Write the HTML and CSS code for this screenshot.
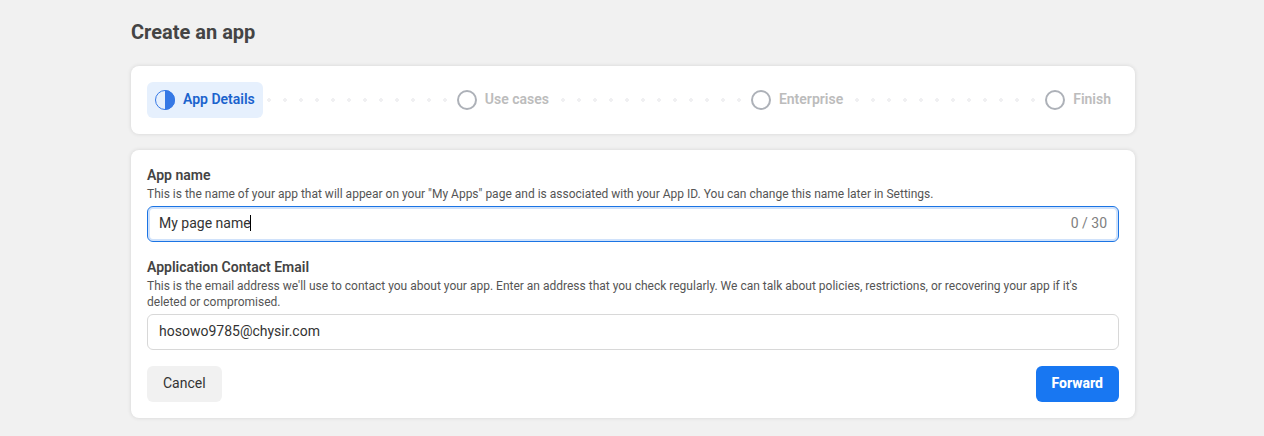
FILE: index.html
```html
<!DOCTYPE html>
<html lang="en">
<head>
<meta charset="utf-8">
<meta name="viewport" content="width=device-width, initial-scale=1">
<title>Create an app</title>
<link rel="stylesheet" href="styles.css">
</head>
<body>
<main class="page">
  <h1 class="page-title">Create an app</h1>

  <ol class="card steps">
    <li class="step step-current" aria-current="step">
      <svg class="step-icon" viewBox="0 0 20 20" aria-hidden="true">
        <circle cx="10" cy="10" r="9.5" fill="none" stroke="currentColor"/>
        <path d="M10 0a10 10 0 0 1 0 20z" fill="currentColor"/>
      </svg>
      <span class="step-label">App Details</span>
    </li>
    <li class="dots" role="presentation"></li>
    <li class="step">
      <svg class="step-icon" viewBox="0 0 20 20" aria-hidden="true"><circle cx="10" cy="10" r="9" fill="none" stroke="currentColor" stroke-width="2"/></svg>
      <span class="step-label">Use cases</span>
    </li>
    <li class="dots" role="presentation"></li>
    <li class="step">
      <svg class="step-icon" viewBox="0 0 20 20" aria-hidden="true"><circle cx="10" cy="10" r="9" fill="none" stroke="currentColor" stroke-width="2"/></svg>
      <span class="step-label">Enterprise</span>
    </li>
    <li class="dots" role="presentation"></li>
    <li class="step">
      <svg class="step-icon" viewBox="0 0 20 20" aria-hidden="true"><circle cx="10" cy="10" r="9" fill="none" stroke="currentColor" stroke-width="2"/></svg>
      <span class="step-label">Finish</span>
    </li>
  </ol>

  <form class="card form">
    <div class="field">
      <label class="field-label" for="app-name">App name</label>
      <p class="field-hint" id="app-name-hint">This is the name of your app that will appear on your "My Apps" page and is associated with your App ID. You can change this name later in Settings.</p>
      <div class="text-box text-box-active">
        <input class="text-input text-input-fit" id="app-name" type="text" value="My page name" maxlength="30" aria-describedby="app-name-hint">
        <span class="caret"></span>
        <span class="counter">0 / 30</span>
      </div>
    </div>
    <div class="field">
      <label class="field-label" for="email">Application Contact Email</label>
      <p class="field-hint" id="email-hint">This is the email address we'll use to contact you about your app. Enter an address that you check regularly. We can talk about policies, restrictions, or recovering your app if it's deleted or compromised.</p>
      <div class="text-box">
        <input class="text-input" id="email" type="email" value="hosowo9785@chysir.com" aria-describedby="email-hint">
      </div>
    </div>
    <div class="actions">
      <button class="button" type="button">Cancel</button>
      <button class="button button-primary" type="button">Forward</button>
    </div>
  </form>
</main>
</body>
</html>
```

FILE: styles.css
```css
* {
  box-sizing: border-box;
}

body {
  margin: 0;
  background: #f1f1f1;
  color: #333;
  font-family: Roboto, "Liberation Sans", sans-serif;
  font-size: 14px;
  line-height: 20px;
}

.page {
  display: flex;
  flex-direction: column;
  gap: 16px;
  max-width: 1036px;
  margin: 0 auto;
  padding: 20px 15px 18px 17px;
}

.page-title {
  margin: 0 0 6px;
  color: #444;
  font-size: 20px;
  font-weight: 700;
  line-height: 24px;
}

.card {
  margin: 0;
  padding: 16px;
  border-radius: 8px;
  background: #fff;
  box-shadow: 0 0 4px rgba(0, 0, 0, 0.12);
}

.steps {
  display: flex;
  align-items: center;
  list-style: none;
}

.step {
  display: flex;
  align-items: center;
  gap: 8px;
  height: 36px;
  padding: 0 8px;
  border-radius: 6px;
  color: #adb1b8;
}

.step-current {
  background: #e6f0fd;
  color: #3578e5;
}

.step-icon {
  display: block;
  flex: none;
  width: 20px;
  height: 20px;
}

.step-label {
  padding-bottom: 2px;
  color: #bcbcbc;
  font-weight: 600;
  white-space: nowrap;
}

.step-current .step-label {
  color: #1b63cd;
}

.dots {
  flex: 1;
  height: 4px;
  margin-left: 4px;
  background: radial-gradient(circle at 2px 2px, #f0f0f2 2px, transparent 2px) 0 0 / 16px 4px repeat-x;
}

.form {
  display: flex;
  flex-direction: column;
  gap: 16px;
}

.field-label {
  display: block;
  padding-bottom: 2px;
  color: #444;
  font-weight: 600;
  line-height: 18px;
}

.field-hint {
  margin: 0 0 4px;
  color: #555;
  font-size: 12px;
  line-height: 16px;
}

.text-box {
  display: flex;
  align-items: center;
  height: 36px;
  padding: 0 11px 2px;
  border: 1px solid #d8d8d8;
  border-radius: 6px;
}

.text-box-active {
  border-color: #1b74e4;
  box-shadow: inset 0 0 0 2px #d0e2fb;
}

.text-input {
  flex: 1;
  min-width: 0;
  padding: 0;
  border: 0;
  outline: 0;
  background: transparent;
  color: #333;
  font: inherit;
}

.text-input-fit {
  flex: none;
  max-width: 80%;
  margin-right: -1px;
  field-sizing: content;
}

.caret {
  width: 1px;
  height: 16px;
  background: #000;
}

.counter {
  margin-left: auto;
  color: #808080;
}

.actions {
  display: flex;
  justify-content: space-between;
}

.button {
  height: 36px;
  padding: 0 16px 2px;
  border: 0;
  border-radius: 6px;
  background: #f1f1f1;
  color: #333;
  font: inherit;
}

.button-primary {
  background: #1877f2;
  color: #fff;
  font-weight: 800;
}
```
